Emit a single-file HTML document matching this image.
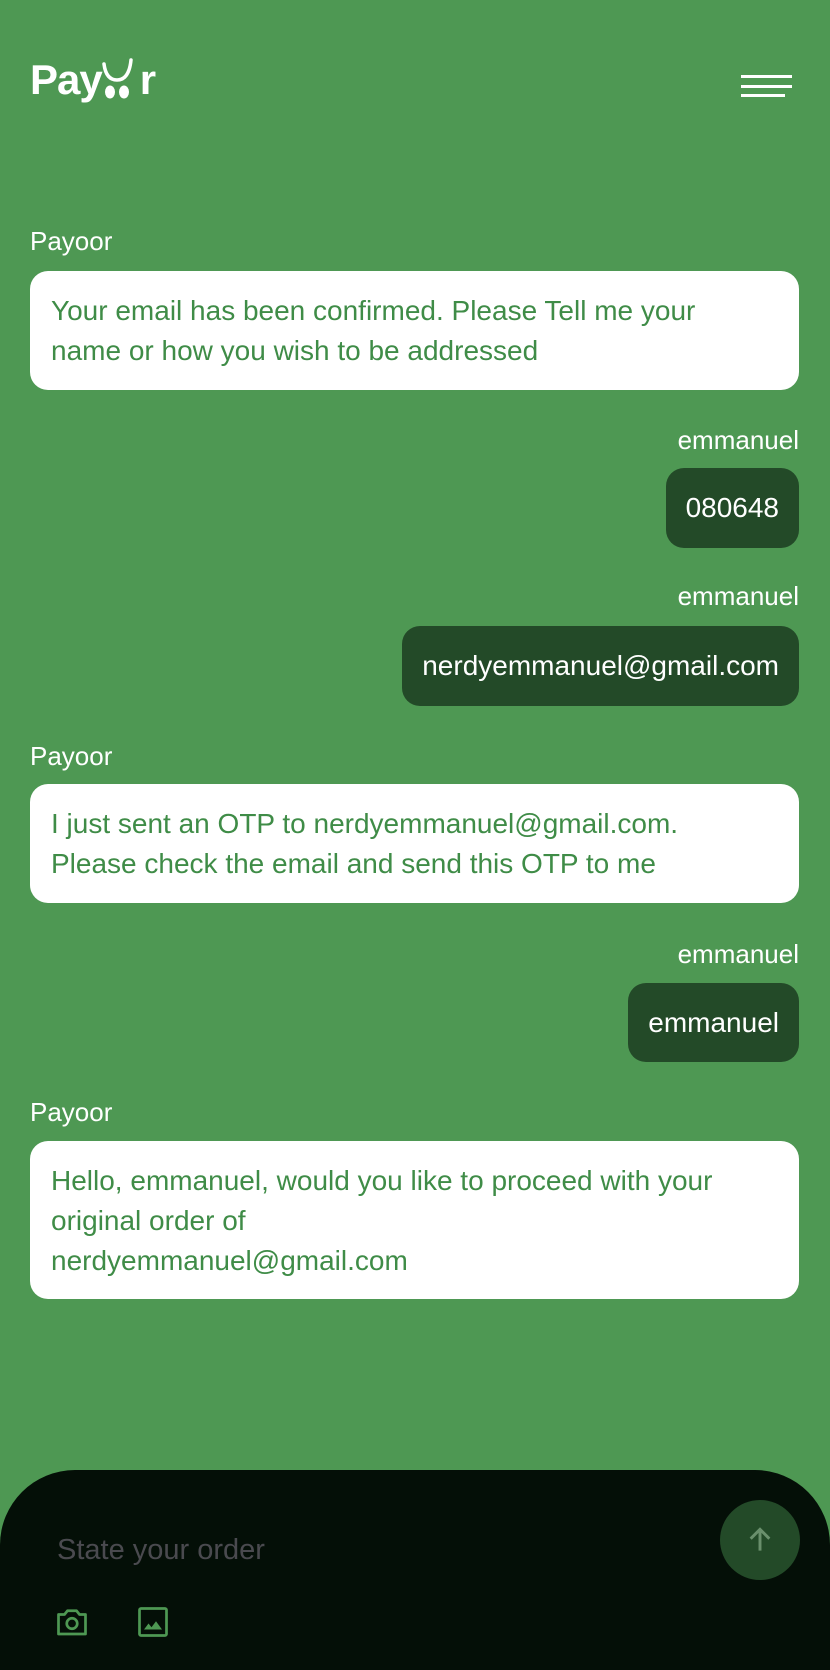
<!DOCTYPE html>
<html><head><meta charset="utf-8"><style>
*{margin:0;padding:0;box-sizing:border-box}
body{width:830px;height:1664px;background:#4e9853;font-family:"Liberation Sans",sans-serif;position:relative;overflow:hidden}
.logo{position:absolute;left:30px;top:56px;color:#fff;font-weight:bold;font-size:42px;letter-spacing:-1px}
.ham div{position:absolute;background:#fff;height:3px}
.lbl{position:absolute;color:#fff;font-size:26px;line-height:30px}
.l{left:30px}.r{right:31px}
.b{position:absolute;border-radius:18px;font-size:28px;line-height:40px}
.w{background:#fff;color:#3f8c47;left:30px;width:769px;padding:20px 40px 10px 21px}
.d{background:#234a28;color:#fff;right:31px;height:80px;line-height:80px;padding:0 20px}
.bot{position:absolute;left:0;top:1470px;width:830px;height:200px;background:#040f07;border-radius:75px 75px 0 0}
</style></head><body>
<div class="logo">Pay<span style="display:inline-block;width:38px"></span>r</div>
<svg style="position:absolute;left:0;top:0" width="200" height="120">
<path d="M104 64 Q106 80 117 80 Q129 80 131 60" fill="none" stroke="#fff" stroke-width="3.5" stroke-linecap="round"/>
<ellipse cx="110" cy="92" rx="5" ry="6.5" fill="#fff"/><ellipse cx="124" cy="92" rx="5" ry="6.5" fill="#fff"/>
</svg>
<div class="ham"><div style="left:741px;top:75px;width:51px"></div><div style="left:741px;top:85px;width:51px"></div><div style="left:741px;top:94px;width:44px"></div></div>

<div class="lbl l" style="top:226px">Payoor</div>
<div class="b w" style="top:271px;height:119px">Your email has been confirmed. Please Tell me your name or how you wish to be addressed</div>
<div class="lbl r" style="top:425px">emmanuel</div>
<div class="b d" style="top:468px">080648</div>
<div class="lbl r" style="top:581px">emmanuel</div>
<div class="b d" style="top:626px">nerdyemmanuel@gmail.com</div>
<div class="lbl l" style="top:741px">Payoor</div>
<div class="b w" style="top:784px;height:119px">I just sent an OTP to nerdyemmanuel@gmail.com. Please check the email and send this OTP to me</div>
<div class="lbl r" style="top:939px">emmanuel</div>
<div class="b d" style="top:983px;height:79px;line-height:79px">emmanuel</div>
<div class="lbl l" style="top:1097px">Payoor</div>
<div class="b w" style="top:1141px;height:158px">Hello, emmanuel, would you like to proceed with your original order of<br>nerdyemmanuel@gmail.com</div>

<div class="bot"></div>
<div style="position:absolute;left:57px;top:1534px;color:#4a4a4f;font-size:29px">State your order</div>
<div style="position:absolute;left:720px;top:1500px;width:80px;height:80px;border-radius:50%;background:#234a28"></div>
<svg style="position:absolute;left:744px;top:1524px" width="32" height="32" viewBox="0 0 24 24"><path d="M12 20V5M5 11l7-7 7 7" fill="none" stroke="#6a8f6c" stroke-width="2.2"/></svg>
<svg style="position:absolute;left:54px;top:1604px" width="36" height="36" viewBox="0 0 24 24"><path d="M3 7h4l2-2.5h6L17 7h4v13H3z" fill="none" stroke="#4e9853" stroke-width="1.8" stroke-linejoin="round"/><circle cx="12" cy="13" r="3.5" fill="none" stroke="#4e9853" stroke-width="1.8"/></svg>
<svg style="position:absolute;left:135px;top:1604px" width="36" height="36" viewBox="0 0 24 24"><rect x="3" y="3" width="18" height="18" rx="1" fill="none" stroke="#4e9853" stroke-width="1.8"/><path d="M6 17l3-4 2 2.5 3-4 4 5.5z" fill="#4e9853"/></svg>
</body></html>
